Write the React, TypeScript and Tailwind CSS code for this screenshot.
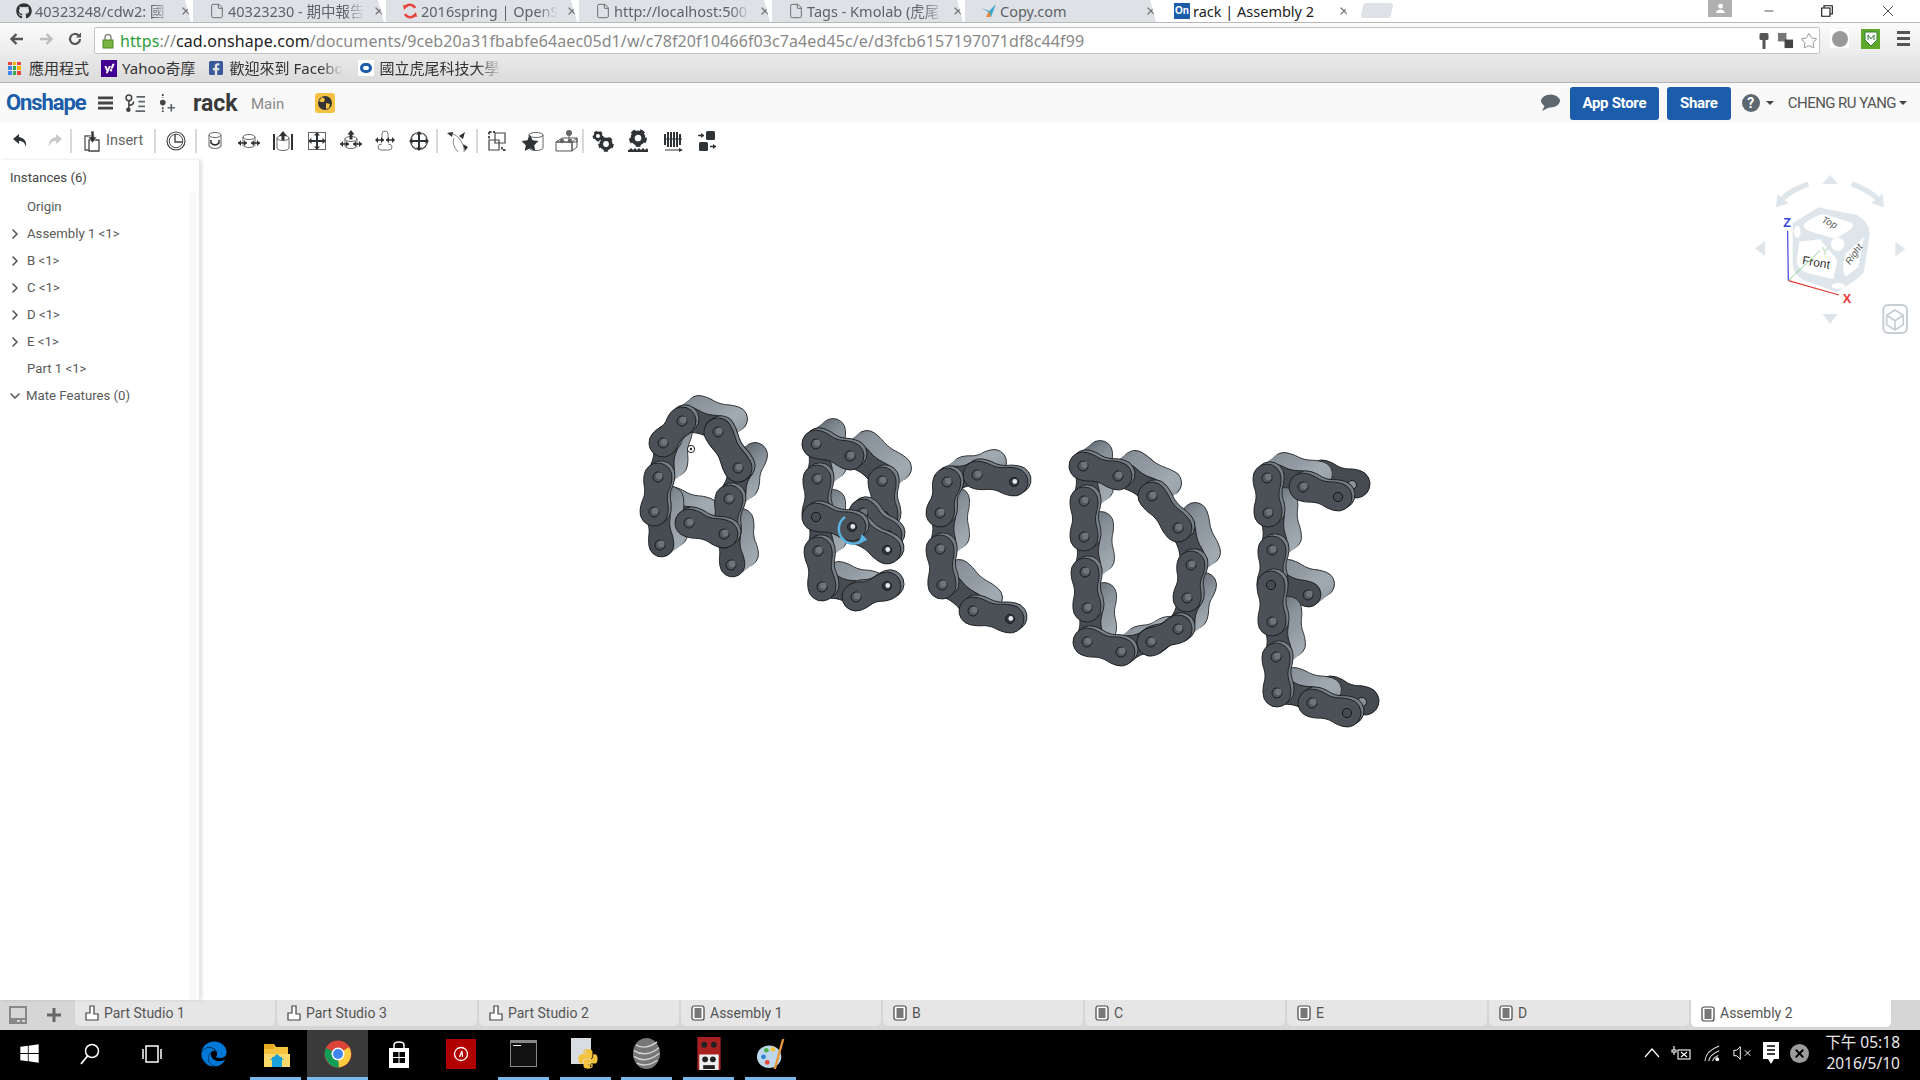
import React from 'react';
import { ChevronDown, ChevronRight, File, Minus, Star, X } from 'lucide-react';
import { FaEdge, FaFacebookSquare, FaGithub, FaPython, FaWindows, FaYahoo } from 'react-icons/fa';

type Pt = [number, number];

// ---------- chain drawing ----------
const OFF: Pt = [17, -13];

function peanutPath(L: number, r: number, w: number) {
  return `M0 ${-r} C${L * 0.3} ${-r} ${L * 0.3} ${-w} ${L / 2} ${-w} S${L * 0.7} ${-r} ${L} ${-r} A${r} ${r} 0 0 1 ${L} ${r} C${L * 0.7} ${r} ${L * 0.7} ${w} ${L / 2} ${w} S${L * 0.3} ${r} 0 ${r} A${r} ${r} 0 0 1 0 ${-r}Z`;
}

function Peanut({ a, b, r = 14, w = 11.5, fill, stroke = '#1b1e20', dx = 0, dy = 0, sw = 0.9 }: { a: Pt; b: Pt; r?: number; w?: number; fill: string; stroke?: string; dx?: number; dy?: number; sw?: number }) {
  const L = Math.hypot(b[0] - a[0], b[1] - a[1]);
  const ang = (Math.atan2(b[1] - a[1], b[0] - a[0]) * 180) / Math.PI;
  return (
    <path
      d={peanutPath(L, r, w)}
      transform={`translate(${a[0] + dx} ${a[1] + dy}) rotate(${ang})`}
      fill={fill}
      stroke={stroke}
      strokeWidth={sw}
    />
  );
}

function Pin({ p, hole }: { p: Pt; hole?: number }) {
  if (hole === 1) {
    return (
      <g>
        <circle cx={p[0]} cy={p[1]} r={4.6} fill="#30353a" stroke="#141618" strokeWidth={0.8} />
        <circle cx={p[0] + 0.8} cy={p[1] - 0.5} r={2.4} fill="#e4e8ea" />
      </g>
    );
  }
  if (hole === 2) {
    return <circle cx={p[0]} cy={p[1]} r={4.6} fill="#454b50" stroke="#141618" strokeWidth={1} />;
  }
  return (
    <g>
      <circle cx={p[0]} cy={p[1]} r={5} fill="#50565b" stroke="#141618" strokeWidth={0.9} />
      <circle cx={p[0] + 1.3} cy={p[1] - 1.1} r={3.3} fill="#6d747a" />
    </g>
  );
}

function Inner({ a, b }: { a: Pt; b: Pt }) {
  const steps = [1, 0.9, 0.8, 0.7, 0.6, 0.5, 0.4, 0.3];
  return (
    <g>
      {steps.map((t) => (
        <Peanut key={t} a={a} b={b} r={12.5} w={10.5} dx={OFF[0] * t} dy={OFF[1] * t} fill="url(#side)" stroke={t === 1 ? '#2a2e31' : 'none'} />
      ))}
      <Peanut a={a} b={b} r={12.5} w={10.5} dx={OFF[0] * 0.2} dy={OFF[1] * 0.2} fill="#464c51" />
    </g>
  );
}

function Outer({ a, b, ha, hb }: { a: Pt; b: Pt; ha?: number; hb?: number }) {
  return (
    <g>
      <Peanut a={a} b={b} dx={3} dy={-2.2} fill="#767f86" />
      <Peanut a={a} b={b} fill="#4b5156" />
      <Pin p={a} hole={ha} />
      <Pin p={b} hole={hb} />
    </g>
  );
}

type Seg = [number, number, number, number, number?, number?];

const letters: { inner: Seg[]; outer: Seg[]; ends?: Pt[] }[] = [
  {
    inner: [
      [663, 443, 658, 477],
      [682, 421, 718, 432],
      [738, 468, 729, 499],
      [654, 512, 689, 523],
      [654, 512, 658, 547],
      [724, 534, 729, 567],
    ],
    ends: [[660, 545], [731, 565]],
    outer: [
      [658, 477, 654, 512],
      [729, 499, 724, 534],
      [663, 443, 682, 421],
      [718, 432, 738, 468],
      [689, 523, 724, 534],
    ],
  },
  {
    inner: [
      [816, 444, 817, 479],
      [850, 456, 882, 481],
      [816, 515, 818, 551],
      [822, 587, 856, 597],
    ],
    outer: [
      [817, 479, 816, 515],
      [882, 481, 884, 516, 0, 1],
      [816, 444, 850, 456],
      [818, 551, 822, 587],
      [863, 513, 888, 535, 0, 1],
      [852, 527, 887, 550, 1, 1],
      [816, 517, 852, 527, 2, 1],
      [856, 597, 887, 586, 0, 1],
    ],
  },
  {
    inner: [
      [947, 482, 977, 475],
      [940, 513, 940, 549],
      [942, 585, 973, 611],
    ],
    outer: [
      [947, 482, 940, 513],
      [977, 475, 1014, 482, 0, 1],
      [940, 549, 942, 585],
      [973, 611, 1010, 619, 0, 1],
    ],
  },
  {
    inner: [
      [1083, 466, 1084, 501],
      [1118, 476, 1152, 496],
      [1178, 528, 1191, 565],
      [1084, 537, 1085, 572],
      [1187, 598, 1178, 629],
      [1087, 608, 1087, 642],
      [1121, 652, 1151, 642],
    ],
    outer: [
      [1084, 501, 1084, 537],
      [1085, 572, 1087, 608],
      [1191, 565, 1187, 598],
      [1083, 466, 1118, 476],
      [1152, 496, 1178, 528],
      [1087, 642, 1121, 652],
      [1151, 642, 1178, 629],
    ],
  },
  {
    inner: [
      [1267, 478, 1303, 487],
      [1268, 513, 1272, 550],
      [1271, 585, 1305, 597],
      [1272, 622, 1276, 657],
      [1277, 693, 1312, 703],
    ],
    ends: [[1308, 595]],
    outer: [
      [1267, 478, 1268, 513],
      [1272, 550, 1271, 585],
      [1271, 585, 1272, 622, 2],
      [1276, 657, 1277, 693],
      [1303, 487, 1338, 497, 0, 2],
      [1312, 703, 1347, 713, 0, 2],
    ],
  },
];

function Chains() {
  return (
    <svg viewBox="200 160 1720 840" className="absolute inset-0 w-full h-full">
      <defs>
        <linearGradient id="side" x1="0" y1="1" x2="1" y2="0">
          <stop offset="0" stopColor="#596167" />
          <stop offset="0.55" stopColor="#88919a" />
          <stop offset="1" stopColor="#a9b1b7" />
        </linearGradient>
      </defs>
      {/* far plates on the E prongs */}
      <Peanut a={[1322, 474]} b={[1356, 484]} fill="#454b50" />
      <Peanut a={[1331, 690]} b={[1365, 701]} fill="#454b50" />
      <circle cx="1352" cy="485" r="4.5" fill="#8a939a" stroke="#1b1e20" />
      <circle cx="1362" cy="702" r="4.5" fill="#8a939a" stroke="#1b1e20" />
      {letters.map((l, i) => (
        <g key={i}>
          {l.inner.map((s, j) => (
            <Inner key={j} a={[s[0], s[1]]} b={[s[2], s[3]]} />
          ))}
          {l.ends?.map((p, j) => <Pin key={j} p={p} />)}
          {l.outer.map((s, j) => (
            <Outer key={j} a={[s[0], s[1]]} b={[s[2], s[3]]} ha={s[4]} hb={s[5]} />
          ))}
        </g>
      ))}
      <circle cx="691" cy="449" r="3.6" fill="#fff" stroke="#222" strokeWidth="1" />
      <circle cx="691" cy="449" r="1.2" fill="#222" />
      <path d="M845 517 A12 12 0 0 0 862 541" fill="none" stroke="#5cb4e4" strokeWidth="2.4" />
      <path d="M858 544 L867 540 L862 534Z" fill="#5cb4e4" />
      <g transform="translate(1740 160) scale(0.3333)" fontFamily="Liberation Sans, sans-serif">
        <path d="M205 72 Q150 92 125 118" fill="none" stroke="#dfe6eb" strokeWidth="16" />
        <path d="M108 142 L112 102 L146 130Z" fill="#dfe6eb" />
        <path d="M335 72 Q390 92 415 118" fill="none" stroke="#dfe6eb" strokeWidth="16" />
        <path d="M432 142 L428 102 L394 130Z" fill="#dfe6eb" />
        <path d="M270 44 L293 72 L247 72Z" fill="#dfe6eb" />
        <path d="M270 492 L293 462 L247 462Z" fill="#dfe6eb" />
        <path d="M45 265 L75 243 L75 288Z" fill="#dfe6eb" />
        <path d="M496 267 L466 245 L466 290Z" fill="#dfe6eb" />
        <path d="M235 142 L350 165 Q395 190 388 230 L372 335 Q360 355 290 396 L190 360 Q160 345 158 310 L158 190Z" fill="#dfe6eb" />
        <path d="M192 192 Q240 155 262 165 L335 188 Q345 195 332 208 L295 232 Q285 238 270 232 L205 212 Q188 205 192 192Z" fill="#fff" />
        <path d="M178 245 L240 238 L292 300 L280 358 L205 340 Q172 330 170 300Z" fill="#fff" />
        <path d="M318 280 L372 232 L355 320 L318 350 Q308 340 310 310Z" fill="#fff" />
        <circle cx="293" cy="253" r="20" fill="#fff" />
        <ellipse cx="172" cy="215" rx="10" ry="18" fill="#fff" />
        <ellipse cx="295" cy="378" rx="20" ry="9" fill="#fff" />
        <text x="0" y="0" fontSize="36" fill="#333" transform="translate(185 312) rotate(10)">Front</text>
        <text x="0" y="0" fontSize="29" fontStyle="italic" fill="#555" transform="translate(243 186) rotate(25)">Top</text>
        <text x="0" y="0" fontSize="29" fontStyle="italic" fill="#555" transform="translate(330 316) rotate(-55)">Right</text>
        <path d="M145 362 L143 212" stroke="#3b44d8" strokeWidth="3.5" />
        <path d="M145 362 L297 405" stroke="#e53935" strokeWidth="3.5" />
        <path d="M145 362 L240 272" stroke="#5fbf5f" strokeWidth="2" />
        <text x="130" y="200" fontSize="38" fontWeight="bold" fill="#3b44d8">Z</text>
        <text x="308" y="430" fontSize="38" fontWeight="bold" fill="#e53935">X</text>
        <text x="244" y="284" fontSize="34" fill="#b8dfb8">Y</text>
        <rect x="430" y="435" width="71" height="84" rx="14" fill="#fff" stroke="#c6cdd3" strokeWidth="6" />
        <path d="M465 450 L490 466 L490 494 L465 510 L440 494 L440 466Z M440 466 L465 482 L490 466 M465 482 L465 510" fill="none" stroke="#c6cdd3" strokeWidth="5" />
      </g>
    </svg>
  );
}

// ---------- chrome ----------
const chromeFont = "[font-family:'Noto_Sans','Noto_Sans_CJK_TC',sans-serif]";

function DocIcon() {
  return <File size={16} strokeWidth={1.4} className="text-[#666] shrink-0" />;
}

function Tab({ icon, title, active, fade = true }: { icon: React.ReactNode; title: string; active?: boolean; fade?: boolean }) {
  return (
    <div
      className={`w-[193px] h-[22px] flex items-center pl-[15px] shrink-0 [clip-path:polygon(0_0,calc(100%-8px)_0,calc(100%-2px)_100%,0_100%)] ${
        active ? 'bg-white text-[#222]' : 'bg-[#dee1e6] text-[#5f6368]'
      }`}
    >
      <span className="w-[18px] h-[18px] flex items-center justify-center shrink-0">{icon}</span>
      <span
        className={`ml-[2px] flex-1 whitespace-nowrap overflow-hidden text-[14.5px] leading-[22px] ${
          fade ? '[mask-image:linear-gradient(to_right,black_85%,transparent)]' : ''
        }`}
      >
        {title}
      </span>
      <X size={12} strokeWidth={2.6} className="ml-[8px] mr-[1px] text-[#777] shrink-0" />
    </div>
  );
}

function ChromeBar() {
  return (
    <div className={chromeFont}>
      {/* tab strip */}
      <div className="h-[22px] bg-white flex relative">
        <Tab icon={<FaGithub size={16} className="text-[#333]" />} title="40323248/cdw2: 國" />
        <Tab icon={<DocIcon />} title="40323230 - 期中報告" />
        <Tab
          icon={
            <svg viewBox="0 0 16 16" className="w-4 h-4">
              <path d="M13 5A6 6 0 0 0 3 4M3 11a6 6 0 0 0 10 1" fill="none" stroke="#e8453c" strokeWidth="2.6" />
              <path d="M1 2l5 1-4 4zM15 14l-5-1 4-4z" fill="#e8453c" />
            </svg>
          }
          title="2016spring | OpenS"
        />
        <Tab icon={<DocIcon />} title="http://localhost:500" />
        <Tab icon={<DocIcon />} title="Tags - Kmolab (虎尾" />
        <Tab
          icon={
            <svg viewBox="0 0 16 16" className="w-4 h-4">
              <path d="M1 5l7 3 7-7-5 13-3-5z" fill="#3fa9c9" />
              <path d="M5 14l3-6 2 6z" fill="#e8863c" />
            </svg>
          }
          title="Copy.com"
          fade={false}
        />
        <Tab
          active
          icon={<span className="w-4 h-4 bg-[#1c5dab] text-white text-[10px] font-bold leading-4 text-center [font-family:'Liberation_Sans',sans-serif]">On</span>}
          title="rack | Assembly 2"
          fade={false}
        />
        <div className="w-[30px] h-[15px] mt-[3px] ml-[11px] bg-[#dee1e6] rounded-[3px] -skew-x-12" />
        <div className="ml-auto flex items-start">
          <div className="w-[24px] h-[17px] bg-[#b0b0b0] flex items-center justify-center mr-[8px]">
            <svg viewBox="0 0 12 12" className="w-[11px] h-[11px]"><circle cx="6" cy="3.5" r="2.6" fill="#fff" /><path d="M1 11q1-4 5-4t5 4z" fill="#fff" /></svg>
          </div>
          <div className="w-[58px] h-[22px] flex items-center justify-center"><Minus size={14} strokeWidth={1.2} className="text-[#111]" /></div>
          <div className="w-[58px] h-[22px] flex items-center justify-center">
            <svg viewBox="0 0 12 12" className="w-3 h-3"><path d="M3 3V.7h8.3V9H9M.7 3H9v8.3H.7z" fill="none" stroke="#111" strokeWidth="1.1" /></svg>
          </div>
          <div className="w-[64px] h-[22px] flex items-center justify-center pr-[1px]"><X size={18} strokeWidth={1} className="text-[#111]" /></div>
        </div>
      </div>
      {/* address row */}
      <div className="h-[32px] bg-[#f5f5f5] border-t border-[#b8b8b8] flex items-start bg-gradient-to-b from-[#fbfbfb] to-[#ececec]">
        <div className="w-[94px] h-[31px] flex items-center shrink-0">
          <svg viewBox="0 0 16 16" className="w-4 h-4 ml-[9px]"><path d="M14 8H3M7.5 3L2.5 8l5 5" fill="none" stroke="#555" strokeWidth="2.4" /></svg>
          <svg viewBox="0 0 16 16" className="w-4 h-4 ml-[13px]"><path d="M2 8h11M8.5 3l5 5-5 5" fill="none" stroke="#bdbdbd" strokeWidth="2.4" /></svg>
          <svg viewBox="0 0 16 16" className="w-4 h-4 ml-[13px]"><path d="M13 8a5 5 0 1 1-1.5-3.6" fill="none" stroke="#555" strokeWidth="2.2" /><path d="M14 1.5v5h-5z" fill="#555" /></svg>
        </div>
        <div className="w-[1726px] h-[27px] mt-[4px] bg-white border border-[#c4c4c4] rounded-[2px] flex items-center pl-[7px] pr-[1px]">
          <svg viewBox="0 0 12 16" className="w-[12px] h-[16px] shrink-0">
            <path d="M3 7V4.5a3 3 0 0 1 6 0V7" fill="none" stroke="#888" strokeWidth="1.4" />
            <rect x="1" y="7" width="10" height="8" fill="#7cb342" stroke="#4f8a21" />
          </svg>
          <span className="ml-[6px] text-[16px] tracking-[0.1px] whitespace-nowrap text-[#888]">
            <span className="text-[#2a9d3a]">https</span>://<span className="text-[#222]">cad.onshape.com</span>/documents/9ceb20a31fbabfe64aec05d1/w/c78f20f10466f03c7a4ed45c/e/d3fcb6157197071df8c44f99
          </span>
          <div className="ml-auto flex items-center gap-[6px]">
            <svg viewBox="0 0 10 18" className="w-[10px] h-[18px]"><rect x="0.5" y="1" width="9" height="7" rx="1.5" fill="#555" /><rect x="3.5" y="8" width="3" height="9" fill="#555" /></svg>
            <svg viewBox="0 0 18 18" className="w-[17px] h-[17px] ml-[2px]"><rect x="1" y="1" width="9" height="9" fill="#777" /><rect x="8" y="8" width="9" height="9" fill="#444" /></svg>
            <Star size={18} strokeWidth={1.2} className="text-[#888]" />
          </div>
        </div>
        <div className="h-[31px] flex-1 flex items-center pl-[10px] gap-[12px]">
          <span className="w-[19px] h-[19px] bg-white flex items-center justify-center shrink-0"><span className="w-[16px] h-[16px] rounded-full bg-[#999]" /></span>
          <span className="w-[19px] h-[20px] bg-[#5fa82b] flex items-center justify-center shrink-0">
            <svg viewBox="0 0 14 16" className="w-[14px] h-[16px]"><path d="M1 1h12v8l-6 6-6-6z" fill="#fff" stroke="#2e7d32" /><path d="M4 4v5M10 4v5M4 4l3 4 3-4" stroke="#2e7d32" fill="none" /></svg>
          </span>
          <span className="flex flex-col gap-[3px] ml-[5px] shrink-0">
            <span className="w-[13px] h-[3px] bg-[#555]" /><span className="w-[13px] h-[3px] bg-[#555]" /><span className="w-[13px] h-[3px] bg-[#555]" />
          </span>
        </div>
      </div>
      {/* bookmarks */}
      <div className="h-[29px] bg-gradient-to-b from-[#eaeaea] to-[#dcdcdc] border-b border-[#b4b4b4] flex items-center text-[15px] text-[#333]">
        <span className="ml-[8px] w-[13px] h-[13px] grid grid-cols-3 gap-[1px] shrink-0">
          {['#e8453c', '#f4b400', '#e8453c', '#4285f4', '#34a853', '#f4b400', '#4285f4', '#34a853', '#e8453c'].map((c, i) => (
            <span key={i} style={{ backgroundColor: c }} />
          ))}
        </span>
        <span className="ml-[8px]">應用程式</span>
        <span className="ml-[12px] w-[16px] h-[17px] bg-[#400090] flex items-center justify-center text-white shrink-0"><FaYahoo size={11} /></span>
        <span className="ml-[5px]">Yahoo奇摩</span>
        <FaFacebookSquare size={16} className="ml-[12px] text-[#3b5998] shrink-0" />
        <span className="ml-[6px] w-[113px] overflow-hidden whitespace-nowrap [mask-image:linear-gradient(to_right,black_80%,transparent)]">歡迎來到 Facebo</span>
        <span className="ml-[15px] w-[16px] h-[16px] bg-white flex items-center justify-center shrink-0"><span className="w-[12px] h-[10px] rounded-full border-[3px] border-[#1c5dab]" /></span>
        <span className="ml-[6px] w-[122px] overflow-hidden whitespace-nowrap [mask-image:linear-gradient(to_right,black_80%,transparent)]">國立虎尾科技大學</span>
      </div>
    </div>
  );
}

// ---------- onshape header ----------
function OnshapeHeader() {
  return (
    <div className="h-[40px] bg-[#f9f9f9] flex items-center [font-family:Roboto,sans-serif]">
      <span className="ml-[6px] w-[79px] text-[22px] font-bold text-[#1c5dab] tracking-[-1.1px] leading-none whitespace-nowrap">Onshape</span>
      <svg viewBox="0 0 16 14" className="ml-[13px] w-[15px] h-[14px]"><path d="M0 0h16v3H0zM0 5.500h16v3H0zM0 11h16v3H0z" fill="#444" /></svg>
      <svg viewBox="0 0 22 20" className="ml-[12px] w-[21px] h-[19px]" fill="none" stroke="#444" strokeWidth="1.6">
        <circle cx="4" cy="4" r="3" /><circle cx="3.500" cy="16.500" r="1.600" fill="#444" />
        <path d="M4 7v8M4 12c3 0 5-1 5-4" />
        <path d="M12 3h9M14 8h7M14 13h7M11 18h10" stroke="#5d6770" strokeWidth="1.800" />
      </svg>
      <svg viewBox="0 0 18 20" className="ml-[13px] w-[17px] h-[19px]">
        <circle cx="4" cy="9" r="3" fill="#444" />
        <path d="M4 0v4M4 14v5" stroke="#444" strokeWidth="1.800" strokeDasharray="2 1.500" />
        <path d="M9 14.500h8M13 10.500v8" stroke="#5d6770" strokeWidth="1.800" />
      </svg>
      <span className="ml-[17px] w-[58px] text-[23px] font-bold text-[#3a3a3a] leading-none">rack</span>
      <span className="text-[15px] text-[#888] leading-none mt-[3px]">Main</span>
      <span className="ml-[31px] w-[20px] h-[20px] rounded-[3px] bg-[#f6c244] flex items-center justify-center">
        <svg viewBox="0 0 16 16" className="w-4 h-4"><circle cx="8" cy="8" r="7" fill="#333" /><path d="M5 2l3 2-1 3-3 0-2-1zM9 8l4 1-1 4-3 1z" fill="#f6c244" /></svg>
      </span>
      <div className="ml-auto flex items-center">
        <svg viewBox="0 0 20 18" className="w-[20px] h-[18px]"><ellipse cx="10.500" cy="7" rx="9.500" ry="6.500" fill="#5d6770" /><path d="M5 11L2 17l8-4z" fill="#5d6770" /></svg>
        <span className="ml-[10px] w-[89px] h-[33px] rounded-[3px] bg-[#1c5dab] text-white text-[15px] font-bold flex items-center justify-center tracking-[-0.3px]">App Store</span>
        <span className="ml-[8px] w-[64px] h-[33px] rounded-[3px] bg-[#1c5dab] text-white text-[15px] font-bold flex items-center justify-center tracking-[-0.3px]">Share</span>
        <span className="ml-[11px] w-[18px] h-[18px] rounded-full bg-[#5d6770] text-white text-[14px] font-bold leading-[18px] text-center">?</span>
        <span className="ml-[6px] border-x-[4px] border-x-transparent border-t-[4px] border-t-[#444]" />
        <span className="ml-[14px] text-[15px] text-[#555] tracking-[-0.55px] whitespace-nowrap">CHENG RU YANG</span>
        <span className="ml-[3px] mr-[13px] border-x-[4px] border-x-transparent border-t-[4px] border-t-[#444]" />
      </div>
    </div>
  );
}

// ---------- toolbar ----------
const ink = '#2f3336';
const Cyl = ({ x = 12, y = 6, rx = 6, h = 11, fill = 'none' }: { x?: number; y?: number; rx?: number; h?: number; fill?: string }) => (
  <g fill={fill} stroke="#666" strokeWidth="1">
    <path d={`M${x - rx} ${y}v${h}a${rx} 2.500 0 0 0 ${rx * 2} 0v${-h}`} />
    <ellipse cx={x} cy={y} rx={rx} ry="2.500" />
  </g>
);
const Arrow4 = ({ x = 12, y = 12, s = 7 }: { x?: number; y?: number; s?: number }) => (
  <g fill={ink}>
    <path d={`M${x - 1} ${y - s + 2}h2v${2 * s - 4}h-2zM${x - s + 2} ${y - 1}h${2 * s - 4}v2h${-2 * s + 4}z`} />
    <path d={`M${x} ${y - s - 1}l3 3.500h-6zM${x} ${y + s + 1}l3 -3.500h-6zM${x - s - 1} ${y}l3.500 -3v6zM${x + s + 1} ${y}l-3.500 -3v6z`} />
  </g>
);
const Gear = ({ x, y, r }: { x: number; y: number; r: number }) => (
  <g>
    <circle cx={x} cy={y} r={r * 0.72} fill="none" stroke={ink} strokeWidth={r * 0.55} />
    <circle cx={x} cy={y} r={r} fill="none" stroke={ink} strokeWidth={r * 0.4} strokeDasharray={`${r * 0.62} ${r * 0.62}`} />
  </g>
);

const toolIcons: Record<string, React.ReactNode> = {
  undo: <path d="M10 5l-6 5 6 5v-3c4 0 6 2 7 6 1-6-2-9-7-10z" fill={ink} />,
  redo: <path d="M14 5l6 5-6 5v-3c-4 0-6 2-7 6-1-6 2-9 7-10z" fill="#c9c9c9" />,
  insert: (
    <g>
      <path d="M5 7h9v14H5z" fill="none" stroke="#555" strokeWidth="1.300" />
      <path d="M9 11h10v11H9z" fill="#fff" stroke="#444" strokeWidth="1.300" />
      <path d="M11 2h3v6h3l-4.500 6L8 8h3z" fill="#333" stroke="#fff" strokeWidth="0.600" />
    </g>
  ),
  clock: (
    <g fill="none" stroke="#444">
      <circle cx="12" cy="12" r="9" strokeWidth="1.200" />
      <circle cx="12" cy="12" r="6.800" strokeWidth="1" />
      <path d="M11 5v8h7" strokeWidth="1.400" />
    </g>
  ),
  c1: (
    <g>
      <Cyl />
      <path d="M6 13q0 6 6 6t6-6v5l-6 2-6-2z" fill="#888" />
      <path d="M8 11v3q4 4 8 0v-3" fill="none" stroke="#222" strokeWidth="1.400" />
    </g>
  ),
  c2: (
    <g>
      <Cyl y={8} h={8} />
      <path d="M1 14h9M14 14h9" stroke={ink} strokeWidth="1.500" />
      <path d="M1 14l3-3v6zM10 14l-3-3v6zM14 14l3-3v6zM23 14l-3-3v6z" fill={ink} />
    </g>
  ),
  c3: (
    <g>
      <Cyl y={9} h={10} />
      <path d="M3 5v16M21 5v16" stroke={ink} strokeWidth="2" />
      <path d="M12 2l4 5h-2.500v4h-3V7H8z" fill={ink} />
    </g>
  ),
  move: (
    <g>
      <rect x="3.500" y="3.500" width="17" height="17" fill="none" stroke="#666" />
      <path d="M3.500 12h17M12 3.500v17" stroke="#666" />
      <Arrow4 s={8} />
    </g>
  ),
  c5: (
    <g>
      <Cyl y={10} h={7} />
      <path d="M12 1l3.500 4.500h-2v5h-3v-5h-2z" fill={ink} />
      <path d="M1 15h9M14 15h9" stroke={ink} strokeWidth="1.500" />
      <path d="M1 15l3-3v6zM10 15l-3-3v6zM14 15l3-3v6zM23 15l-3-3v6z" fill={ink} />
    </g>
  ),
  c6: (
    <g>
      <path d="M9 12V5a3 3 0 0 1 6 0v7M5 18q0-3 4-3M19 18q0-3-4-3M5 18q0 3 3 3h8q3 0 3-3" fill="none" stroke="#777" />
      <path d="M3 11h8M13 11h8" stroke={ink} strokeWidth="1.500" />
      <path d="M2 11l3-3v6zM11 11l-3-3v6zM13 11l3-3v6zM22 11l-3-3v6z" fill={ink} />
    </g>
  ),
  sph: (
    <g>
      <circle cx="12" cy="12" r="8.500" fill="none" stroke="#444" strokeWidth="1.200" />
      <Arrow4 s={9} />
    </g>
  ),
  rel: (
    <g>
      <path d="M4 4q8 1 12 8t3 11M9 9q-3 6 4 14" fill="none" stroke="#888" />
      <path d="M2 4l6-1-1 5zM20 3l-6 4 4 3zM18 15l2 7 3-4z" fill={ink} />
    </g>
  ),
  bool: (
    <g fill="none" stroke="#444" strokeWidth="1.200">
      <path d="M4 3h6M4 3v7" strokeDasharray="2.500 1.500" strokeWidth="1.800" />
      <path d="M10 4h10v10H10z" />
      <path d="M4 11h10v10H4z" />
      <path d="M17 18v3h4" strokeDasharray="2.500 1.500" strokeWidth="1.800" />
    </g>
  ),
  star: (
    <g>
      <Cyl x={15} y={6} rx={7} h={13} />
      <path d="M9 6l2.600 5.300 5.900.8-4.300 4.100 1 5.800L9 19.200 3.800 22l1-5.800L.5 12.100l5.900-.8z" fill={ink} />
    </g>
  ),
  mate: (
    <g>
      <circle cx="15" cy="4" r="3" fill="#666" />
      <path d="M15 7v5" stroke="#666" />
      <path d="M2 13l6-4h15v4zM2 13h16v9H2zM18 13l5-4v9l-5 4z" fill="none" stroke="#555" />
      <circle cx="8" cy="12" r="2.200" fill="#666" /><circle cx="16" cy="12" r="2.200" fill="#666" />
    </g>
  ),
  gears: (
    <g>
      <Gear x={7} y={7} r={4.500} />
      <Gear x={15} y={15} r={6.500} />
    </g>
  ),
  gearb: (
    <g>
      <Gear x={12} y={9} r={7.500} />
      <path d="M2 21h20v2H2z" fill={ink} />
      <path d="M3 21l2-2 2 2 2-2 2 2 2-2 2 2 2-2 2 2 2-2 1 2z" fill={ink} />
    </g>
  ),
  spring: (
    <g stroke={ink} fill="none">
      <path d="M4 5v11M7 3v15M10 3v15M13 3v15M16 3v15M19 5v11" strokeWidth="2" />
      <path d="M3 10h18" strokeWidth="1" />
      <path d="M4 21h14" strokeWidth="1" />
      <path d="M22 21l-4-2v4z" fill={ink} stroke="none" />
    </g>
  ),
  split: (
    <g>
      <rect x="11" y="2" width="9" height="9" rx="1.500" fill={ink} />
      <rect x="4" y="13" width="9" height="9" rx="1.500" fill={ink} />
      <path d="M3 6.500h6M15 17.500h6" stroke={ink} strokeWidth="1.300" />
      <path d="M9 6.500l-3-2.500v5zM21 17.500l-3-2.500v5z" fill={ink} />
    </g>
  ),
};

function ToolIcon({ name, w = 34 }: { name: string; w?: number }) {
  return (
    <div className="h-[35px] flex items-center justify-center shrink-0" style={{ width: w }}>
      <svg viewBox="0 0 24 24" className="w-[24px] h-[24px]">{toolIcons[name]}</svg>
    </div>
  );
}

const Sep = () => <div className="w-[2px] h-[24px] bg-[#d9d9d9] shrink-0" />;

function Toolbar() {
  return (
    <div className="h-[37px] bg-white flex items-center pl-[4px] pb-[2px] [font-family:Roboto,sans-serif]">
      <ToolIcon name="undo" w={33} />
      <ToolIcon name="redo" w={33} />
      <Sep />
      <ToolIcon name="insert" w={40} />
      <span className="text-[14.5px] text-[#666] w-[48px] -ml-[6px]">Insert</span>
      <Sep />
      <ToolIcon name="clock" w={39} />
      <Sep />
      <ToolIcon name="c1" w={35} />
      <ToolIcon name="c2" />
      <ToolIcon name="c3" />
      <ToolIcon name="move" />
      <ToolIcon name="c5" />
      <ToolIcon name="c6" />
      <ToolIcon name="sph" w={34} />
      <Sep />
      <ToolIcon name="rel" w={38} />
      <Sep />
      <ToolIcon name="bool" w={38} />
      <ToolIcon name="star" w={33} />
      <ToolIcon name="mate" w={33} />
      <Sep />
      <ToolIcon name="gears" w={37} />
      <ToolIcon name="gearb" w={34} />
      <ToolIcon name="spring" w={35} />
      <ToolIcon name="split" w={34} />
    </div>
  );
}

// ---------- feature tree ----------
const treeRows: { label: string; arrow?: 'right' | 'down' }[] = [
  { label: 'Origin' },
  { label: 'Assembly 1 <1>', arrow: 'right' },
  { label: 'B <1>', arrow: 'right' },
  { label: 'C <1>', arrow: 'right' },
  { label: 'D <1>', arrow: 'right' },
  { label: 'E <1>', arrow: 'right' },
  { label: 'Part 1 <1>' },
  { label: 'Mate Features (0)', arrow: 'down' },
];

function Tree() {
  return (
    <div className="w-[200px] shrink-0 bg-white border-r border-[#e4e4e4] shadow-[2px_0_3px_rgba(0,0,0,0.12)] relative z-10 flex flex-col [font-family:Roboto,sans-serif] text-[13.2px] text-[#5a5a5a]">
      <div className="h-[33px] pl-[10px] pt-[9px] leading-[18px] text-[#444]">Instances (6)</div>
      <div className="flex flex-1 min-h-0">
        <div className="flex-1">
          {treeRows.map((r) => (
            <div key={r.label} className="h-[27px] flex items-center">
              <span className="w-[27px] shrink-0 pl-[7px]">
                {r.arrow === 'right' && <ChevronRight size={16} strokeWidth={2.4} className="text-[#555]" />}
                {r.arrow === 'down' && <ChevronDown size={16} strokeWidth={2.4} className="text-[#555]" />}
              </span>
              <span className={r.arrow === 'down' ? '-ml-[1px]' : ''}>{r.label}</span>
            </div>
          ))}
        </div>
        <div className="w-[7px] mr-[3px] bg-[#f7f8f9]" />
      </div>
    </div>
  );
}

// ---------- bottom tabs ----------
const StudioIcon = () => (
  <svg viewBox="0 0 14 16" className="w-[14px] h-[16px] shrink-0"><path d="M5 1h4v8h4v6H1V8h4z" fill="#fff" stroke="#444" strokeWidth="1.200" /></svg>
);
const AsmIcon = () => (
  <svg viewBox="0 0 14 16" className="w-[14px] h-[16px] shrink-0"><rect x="1" y="1" width="12" height="14" rx="2" fill="#fff" stroke="#444" strokeWidth="1.200" /><rect x="3.500" y="3" width="7" height="10" fill="#777" /></svg>
);

const bottomTabs: { label: string; studio?: boolean; active?: boolean }[] = [
  { label: 'Part Studio 1', studio: true },
  { label: 'Part Studio 3', studio: true },
  { label: 'Part Studio 2', studio: true },
  { label: 'Assembly 1' },
  { label: 'B' },
  { label: 'C' },
  { label: 'E' },
  { label: 'D' },
  { label: 'Assembly 2', active: true },
];

function BottomTabs() {
  return (
    <div className="h-[30px] bg-[#d6d6d6] flex items-start [font-family:Roboto,sans-serif] text-[14px] text-[#555]">
      <div className="w-[75px] h-[30px] flex items-center shrink-0">
        <svg viewBox="0 0 20 20" className="ml-[8px] w-[20px] h-[20px]">
          <path d="M1 1h18v18H1z" fill="#888" /><path d="M3 3h14v10H3z" fill="#d6d6d6" /><path d="M9 15h3v2H9zM14 15h3v2h-3z" fill="#d6d6d6" />
        </svg>
        <svg viewBox="0 0 14 14" className="ml-[19px] w-[14px] h-[14px]"><path d="M5.500 0h3v5.500H14v3H8.500V14h-3V8.500H0v-3h5.500z" fill="#666" /></svg>
      </div>
      {bottomTabs.map((t) => (
        <div
          key={t.label}
          className={`w-[200px] mt-0 mr-[2px] rounded-b-[5px] flex items-center pl-[10px] gap-[5px] shrink-0 ${t.active ? 'bg-white h-[27px]' : 'bg-[#e6e6e6] h-[26px]'}`}
        >
          {t.studio ? <StudioIcon /> : <AsmIcon />}
          <span className="whitespace-nowrap">{t.label}</span>
        </div>
      ))}
    </div>
  );
}

// ---------- taskbar ----------
const taskItems: { icon: React.ReactNode; under?: boolean; active?: boolean }[] = [
  { icon: <FaWindows size={21} className="text-white" /> },
  {
    icon: (
      <svg viewBox="0 0 24 24" className="w-[24px] h-[24px]" fill="none" stroke="#fff" strokeWidth="1.500"><circle cx="14" cy="9" r="6.500" /><path d="M9.500 14L3 22" strokeWidth="1.800" /></svg>
    ),
  },
  {
    icon: (
      <svg viewBox="0 0 24 24" className="w-[24px] h-[24px]" fill="none" stroke="#fff" strokeWidth="1.500"><rect x="6" y="4" width="12" height="16" /><path d="M3 7v10M21 7v10" /></svg>
    ),
  },
  { icon: <FaEdge size={26} className="text-[#0078d7]" /> },
  {
    under: true,
    icon: (
      <svg viewBox="0 0 28 28" className="w-[28px] h-[28px]">
        <path d="M2 4h10l2 3h12v20H2z" fill="#f4c23d" /><path d="M2 4h10v5H2z" fill="#e5a823" /><rect x="2" y="14" width="26" height="13" fill="#fbd86a" /><rect x="10" y="17" width="10" height="10" fill="#1ca0dc" /><path d="M15 14l7 6H8z" fill="#1ca0dc" />
      </svg>
    ),
  },
  {
    active: true,
    under: true,
    icon: (
      <svg viewBox="0 0 28 28" className="w-[28px] h-[28px]">
        <circle cx="14" cy="14" r="13.500" fill="#db4437" />
        <path d="M14 14L3 21a13.500 13.500 0 0 0 12 6.500z" fill="#0f9d58" />
        <path d="M14 14l11-7a13.500 13.500 0 0 1-10 20.500z" fill="#ffcd40" />
        <path d="M2 8L14 14 3 21A13.500 13.500 0 0 1 2 8z" fill="#0f9d58" />
        <circle cx="14" cy="14" r="6.500" fill="#fff" /><circle cx="14" cy="14" r="5" fill="#4285f4" />
      </svg>
    ),
  },
  {
    icon: (
      <svg viewBox="0 0 28 28" className="w-[28px] h-[28px]">
        <path d="M4 8h20v20H4z" fill="#fff" /><path d="M9 8V5q0-3 5-3t5 3v3" fill="none" stroke="#fff" strokeWidth="1.500" />
        <path d="M8 12h5.500v5H8zM14.500 12H20v5h-5.500zM8 18h5.500v5H8zM14.500 18H20v5h-5.500z" fill="#000" />
      </svg>
    ),
  },
  {
    icon: (
      <div className="w-[30px] h-[30px] bg-[#b00000] flex items-center justify-center">
        <svg viewBox="0 0 16 16" className="w-[16px] h-[16px]" fill="none" stroke="#fff" strokeWidth="1.300"><circle cx="8" cy="8" r="6.500" /><path d="M6.500 11l2.500-6 .5 6" /></svg>
      </div>
    ),
  },
  {
    under: true,
    icon: (
      <div className="w-[27px] h-[27px] bg-[#111] border border-[#888] border-t-[3px] flex pl-[2px] pt-[2px]">
        <span className="w-[8px] h-[1px] bg-white" />
      </div>
    ),
  },
  {
    under: true,
    icon: (
      <div className="relative w-[28px] h-[32px]">
        <div className="absolute left-0 top-0 w-[20px] h-[26px] bg-[#d8dde2]" />
        <FaPython size={22} className="absolute right-0 bottom-0 text-[#f4c23d]" />
      </div>
    ),
  },
  {
    under: true,
    icon: (
      <svg viewBox="0 0 30 34" className="w-[29px] h-[33px]">
        <ellipse cx="15" cy="17" rx="14" ry="16" fill="#777" />
        <path d="M4 8q10 6 22-3M2 14q12 8 26-3M2 20q12 8 26-3M5 27q10 5 21-3" stroke="#d0d0d0" strokeWidth="1.500" fill="none" />
      </svg>
    ),
  },
  {
    under: true,
    icon: (
      <svg viewBox="0 0 24 34" className="w-[24px] h-[33px]">
        <rect width="24" height="34" fill="#a82020" /><circle cx="7" cy="8" r="3" fill="#222" /><circle cx="17" cy="8" r="3" fill="#222" />
        <path d="M2 18h20v16H2z" fill="#eee" /><circle cx="8" cy="23" r="3" fill="#222" /><circle cx="16" cy="23" r="3" fill="#222" /><path d="M6 29h12v4H6z" fill="#222" />
      </svg>
    ),
  },
  {
    under: true,
    icon: (
      <svg viewBox="0 0 32 34" className="w-[30px] h-[32px]">
        <ellipse cx="14" cy="20" rx="13" ry="12" fill="#bcd7ea" />
        <circle cx="8" cy="20" r="2.500" fill="#2e7fd0" /><circle cx="11" cy="13" r="2.500" fill="#4caf50" /><circle cx="18" cy="12" r="2.500" fill="#f4c23d" /><circle cx="12" cy="26" r="2.500" fill="#e8453c" />
        <path d="M29 1L20 33" stroke="#e8963c" strokeWidth="2.500" />
      </svg>
    ),
  },
];

function Taskbar() {
  return (
    <div className="h-[50px] bg-black flex items-stretch [font-family:'Noto_Sans','Noto_Sans_CJK_TC',sans-serif]">
      {taskItems.map((t, i) => (
        <div key={i} className={`${i === 0 ? 'w-[59px]' : 'w-[61.9px]'} shrink-0 flex flex-col items-center ${t.active ? 'bg-[#3a3a3a]' : ''}`}>
          <div className="flex-1 flex items-center justify-center">{t.icon}</div>
          <span className={`h-[3px] ${t.active ? 'w-full' : 'w-[51px]'} ${t.under ? 'bg-[#76b9ed]' : ''}`} />
        </div>
      ))}
      <div className="ml-auto flex items-center text-white pb-[4px]">
        <svg viewBox="0 0 16 10" className="w-[16px] h-[10px]" fill="none" stroke="#fff" strokeWidth="1.200"><path d="M1 9l7-8 7 8" /></svg>
        <svg viewBox="0 0 20 18" className="ml-[11px] w-[20px] h-[18px]" fill="none" stroke="#fff" strokeWidth="1.100"><path d="M3 2v4M1 6h4v2H1zM3 8v3" /><rect x="7" y="6" width="12" height="9" /><path d="M10 8l6 5M16 8l-6 5" /></svg>
        <svg viewBox="0 0 20 20" className="ml-[12px] w-[19px] h-[19px]" fill="none" stroke="#ddd" strokeWidth="1.100"><path d="M2 18Q3 7 17 2M6 18Q7 11 17 7M10 18q1-4 6-6" /><circle cx="15" cy="16" r="2" fill="#fff" stroke="none" /></svg>
        <svg viewBox="0 0 22 16" className="ml-[11px] w-[20px] h-[16px]" fill="none" stroke="#fff" strokeWidth="1.100"><path d="M1 5h3l4-4v14l-4-4H1z" /><path d="M13 5l6 6M19 5l-6 6" /></svg>
        <svg viewBox="0 0 16 22" className="ml-[10px] w-[16px] h-[22px]"><path d="M0 0h16v17h-5l-3 5-3-5H0z" fill="#fff" /><path d="M4 4h8M4 8h8M4 12h8" stroke="#000" strokeWidth="1.300" /></svg>
        <span className="ml-[11px] w-[19px] h-[19px] rounded-full bg-[#9c9c9c] flex items-center justify-center"><X size={13} strokeWidth={3.4} className="text-black" /></span>
        <div className="ml-[12px] w-[79px] mr-[20px] text-right text-[15.5px] leading-[21px] text-[#e8e8e8] whitespace-nowrap">
          <div>下午 05:18</div>
          <div>2016/5/10</div>
        </div>
      </div>
    </div>
  );
}

export default function App() {
  return (
    <div className="w-[1920px] h-[1080px] flex flex-col overflow-hidden bg-white">
      <ChromeBar />
      <OnshapeHeader />
      <Toolbar />
      <div className="flex flex-1 min-h-0">
        <Tree />
        <div className="flex-1 relative bg-white">
          <Chains />
        </div>
      </div>
      <BottomTabs />
      <Taskbar />
    </div>
  );
}
